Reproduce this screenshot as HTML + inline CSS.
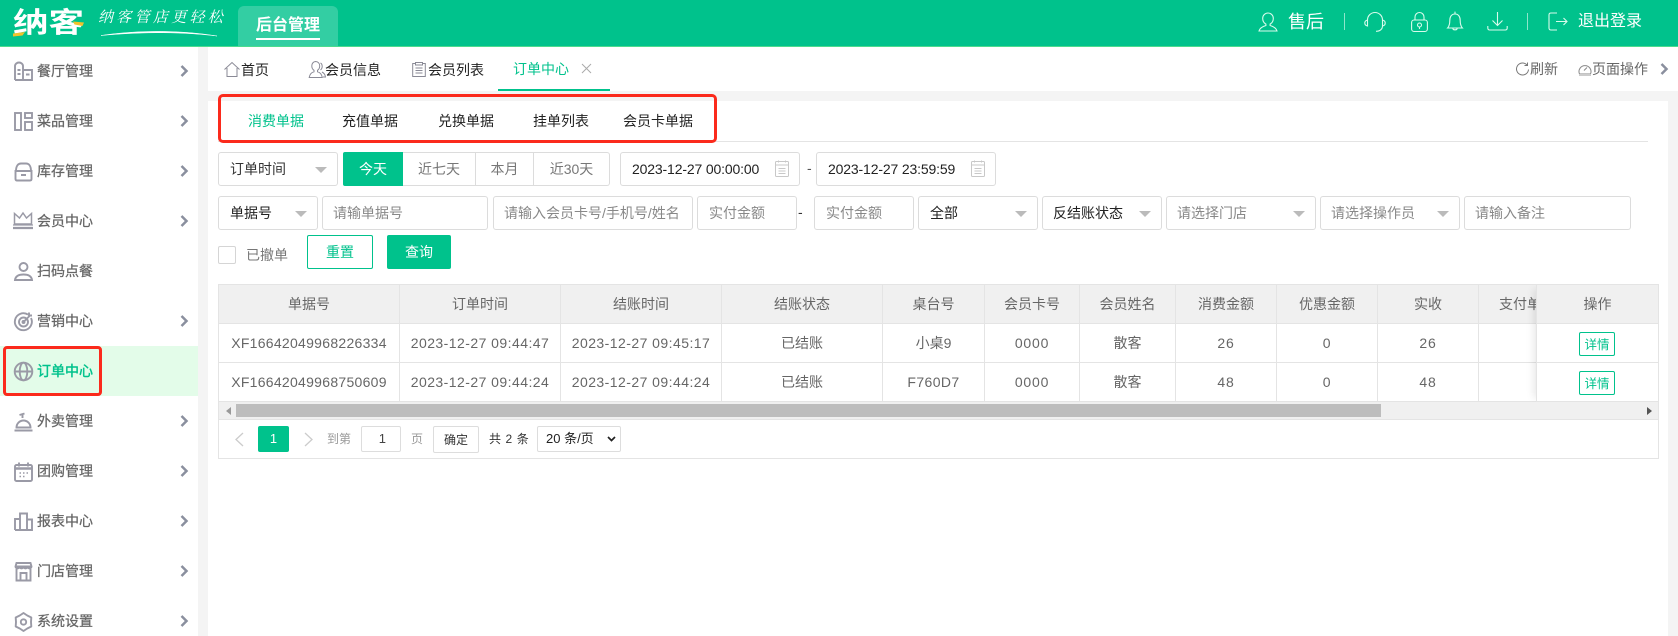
<!DOCTYPE html>
<html lang="zh-CN"><head><meta charset="utf-8"><title>订单中心</title>
<style>
*{box-sizing:border-box;margin:0;padding:0}
html,body{width:1678px;height:636px;overflow:hidden;background:#fff}
body{position:relative;font:14px/20px "Liberation Sans","Noto Sans CJK SC",sans-serif;color:#666}
.a{position:absolute;white-space:nowrap}
svg{position:absolute;fill:none;overflow:visible}
.side{left:37px;width:100px;height:50px;line-height:50px;font-size:14px;color:#666;-webkit-text-stroke:.25px #666}
.ch{left:180px;width:8px;height:12px}
.ch path{stroke-width:2.500}
.ic{left:14px;width:19px;height:19px;stroke:#9a9aa6;stroke-width:1.900}
.h{stroke:#d8fbec;stroke-width:1.100}
.t{stroke:#8a8a96;stroke-width:1}
.f{height:34px;line-height:32px;border:1px solid #dcdcdc;border-radius:3px;padding-left:11px;background:#fff;color:#888;overflow:hidden}
.p10{padding-left:10px}
.s{color:#333}
.f i{position:absolute;right:10px;top:14px;width:0;height:0;border-left:6px solid transparent;border-right:6px solid transparent;border-top:6px solid #bbb}
.g{top:152px;height:34px;line-height:32px;border:1px solid #dcdcdc;border-left:0;text-align:center;color:#777}
table{border-collapse:separate;border-spacing:0;table-layout:fixed;position:absolute;left:0;top:0}
td,th{height:39px;font-weight:400;text-align:center;border-right:1px solid #e4e4e4;border-bottom:1px solid #e4e4e4;color:#666;white-space:nowrap;overflow:hidden;padding:0}
th{background:#f0f0f0}
.dt{letter-spacing:.45px}.xf{letter-spacing:.28px}.n{letter-spacing:.8px}
.d{left:1579px;width:36px;height:24px;line-height:24px;border:1px solid #00c28c;border-radius:2px;color:#00c28c;font-size:12.500px;text-align:center;background:#fff}
</style></head><body>

<!-- header -->
<div class="a" style="left:0;top:0;width:1678px;height:46px;background:#00c28c"></div>
<div class="a" style="left:0;top:46px;width:1678px;height:1px;background:#4ddb8e"></div>
<div class="a" style="left:13px;top:4px;width:60px;height:38px;line-height:38px;font-size:28px;font-weight:700;color:#fff;transform:scaleX(1.270);transform-origin:0 50%">纳客</div>
<svg style="left:0;top:0;width:100px;height:46px"><path d="M13 33.500l12-1.500-2.500 3.500-9.500 1zM73 21.500l11 1-1.500 3.500-8-1.500z" fill="#f1c22c"/></svg>
<div class="a" style="left:98px;top:5px;width:130px;height:24px;line-height:24px;font-family:'Noto Serif CJK SC',serif;font-size:15px;letter-spacing:3.300px;color:#fff;font-style:italic">纳客管店更轻松</div>
<svg style="left:0;top:0;width:240px;height:46px"><path d="M101 35.500C130 31 175 29 217 36C175 31 135 32.500 101 35.500Z" fill="#fff" stroke="#fff" stroke-width=".5"/></svg>
<div class="a" style="left:238px;top:6px;width:100px;height:40px;background:#33cea3;border-radius:6px 6px 0 0"></div>
<div class="a" style="left:256px;top:14px;width:64px;height:24px;line-height:24px;font-size:16px;font-weight:700;color:#fff">后台管理</div>
<div class="a" style="left:256px;top:38px;width:64px;height:2px;background:#fff"></div>

<svg class="h" style="left:1258px;top:12px;width:20px;height:20px"><path d="M10 1a5.300 5.300 0 0 1 5.300 5.500c0 2.600-1.400 4.600-3.200 5.600v1.400c2.700.8 6 2.200 6.900 5.500H1c.9-3.300 4.200-4.700 6.900-5.500v-1.400C6.100 11.100 4.700 9.100 4.700 6.500A5.300 5.300 0 0 1 10 1z"/></svg>
<div class="a" style="left:1288px;top:9px;height:26px;line-height:26px;font-size:18px;color:#fff">售后</div>
<div class="a" style="left:1344px;top:13px;width:1px;height:17px;background:#8ee6cb"></div>
<svg class="h" style="left:1364px;top:12px;width:22px;height:20px"><path d="M3.500 9V8a7.500 7.500 0 0 1 15 0v1M3.500 8C1.800 8.400 .8 9.300 .8 11s1 2.600 2.700 3zM18.500 8c1.700.4 2.700 1.300 2.700 3s-1 2.600-2.700 3zM18.500 14c0 3-2.500 5.300-6.500 5.300"/></svg>
<svg class="h" style="left:1411px;top:12px;width:17px;height:20px"><rect x=".6" y="8" width="15.800" height="11.500" rx="2.500"/><path d="M4 8V5a4.500 4.500 0 0 1 9 0v3"/><circle cx="8.500" cy="13" r="2"/><path d="M8.500 15v2"/></svg>
<svg class="h" style="left:1447px;top:11px;width:16px;height:21px"><path d="M8 3C4.300 3 2.800 6 2.800 9.500c0 3.500-.8 6-2.200 7.500h14.800c-1.400-1.500-2.200-4-2.200-7.500C13.200 6 11.700 3 8 3zM8 3V.6M5.800 17.500c.3 1.800 4.100 1.800 4.400 0"/></svg>
<svg class="h" style="left:1487px;top:11px;width:21px;height:20px"><path d="M10.500 1v13M5.500 9.500l5 5 5-5M.8 15v2c0 1.300.8 2 2 2h15.400c1.200 0 2-.7 2-2v-2"/></svg>
<div class="a" style="left:1527px;top:13px;width:1px;height:17px;background:#8ee6cb"></div>
<svg class="h" style="left:1548px;top:12px;width:20px;height:19px"><path d="M9 1H3C1.600 1 1 1.800 1 3v13c0 1.300.6 2 2 2h6M8 9.500h11M15.500 6l3.500 3.500-3.500 3.500"/></svg>
<div class="a" style="left:1578px;top:10px;height:24px;line-height:24px;font-size:16px;color:#fff">退出登录</div>

<!-- backgrounds -->
<div class="a" style="left:198px;top:47px;width:10px;height:589px;background:#f4f4f4"></div>
<div class="a" style="left:198px;top:91px;width:1480px;height:10px;background:#f4f4f4"></div>
<div class="a" style="left:1668px;top:91px;width:10px;height:545px;background:#f4f4f4"></div>

<!-- sidebar -->
<div class="a" style="left:0;top:346px;width:198px;height:50px;background:#e3fce9"></div>
<div class="a side" style="top:46px">餐厅管理</div>
<div class="a side" style="top:96px">菜品管理</div>
<div class="a side" style="top:146px">库存管理</div>
<div class="a side" style="top:196px">会员中心</div>
<div class="a side" style="top:246px">扫码点餐</div>
<div class="a side" style="top:296px">营销中心</div>
<div class="a side" style="top:346px;color:#00c28c;-webkit-text-stroke:.4px #00c28c">订单中心</div>
<div class="a side" style="top:396px">外卖管理</div>
<div class="a side" style="top:446px">团购管理</div>
<div class="a side" style="top:496px">报表中心</div>
<div class="a side" style="top:546px">门店管理</div>
<div class="a side" style="top:596px">系统设置</div>

<svg class="ic" style="top:62px"><path d="M1 18V4c0-2 2-3.500 4-3.500S9 2 9 4v14M1 18h17V8H9M12 12.500h3.500M3.500 8h3M3.500 12h3"/></svg>
<svg class="ic" style="top:112px"><rect x="1" y="1" width="6" height="17"/><rect x="11" y="1" width="7" height="5"/><rect x="11" y="10" width="7" height="8"/></svg>
<svg class="ic" style="top:162px"><path d="M2 9C2 4 4 1.500 7 1.500h5C15 1.500 17 4 17 9M1.500 9h16v8c0 1-.6 1.500-1.500 1.500H3c-.9 0-1.500-.5-1.500-1.500zM7 13h5"/></svg>
<svg class="ic" style="top:212px;left:13px;width:20px;height:18px"><path d="M1.500 12V1.500L6.500 6 10 1l3.500 5 5-4.500V12z" stroke-width="1.500"/><path d="M0 13h20" stroke-width="1.200"/><path d="M0 16h20" stroke-width="2.200"/></svg>
<svg class="ic" style="top:262px"><circle cx="9.500" cy="5" r="4"/><path d="M1 18c.5-3.700 3.500-5.500 8.500-5.500s8 1.800 8.500 5.500z"/></svg>
<svg class="ic" style="top:312px"><path d="M14 2.600A8.500 8.500 0 1 0 17 6"/><circle cx="9.500" cy="10" r="4.500"/><circle cx="9.500" cy="10" r="1"/><path d="M10 9.500l6-6M15 .5v3h3"/></svg>
<svg class="ic" style="top:362px"><circle cx="9.500" cy="9.500" r="8.800"/><ellipse cx="9.500" cy="9.500" rx="3.800" ry="8.800"/><path d="M1 9.500h17"/></svg>
<svg class="ic" style="top:412px"><path d="M2.500 15.500a7 7 0 0 1 14 0zM.5 18.500h18M5.500 3l5-1.500M8.500 2v4"/></svg>
<svg class="ic" style="top:462px"><rect x="1" y="3" width="17" height="16" rx="1.500"/><path d="M1 6.500h17" stroke-width="2.500"/><path d="M5 .5v4M14 .5v4"/><path d="M5.500 11h1.500M9 11h1.500M12.500 11h1.500M5.500 14.500h1.500M9 14.500h1.500" stroke-width="1.500"/></svg>
<svg class="ic" style="top:512px"><path d="M1 18V7h5v11M6 18V1.500h7V18M13 18V7.500h5V18H1"/></svg>
<svg class="ic" style="top:562px"><path d="M2.500 1h14l1 3.500c0 2.500-4 2.500-4 0 0 2.500-4 2.500-4 0 0 2.500-4 2.500-4 0 0 2.500-4 2.500-4 0zM2.500 7v11.500h14V7M6.500 18.500V11h6v7.500M1.500 4.500h16"/></svg>
<svg class="ic" style="top:612px" stroke-linejoin="round"><path d="M9.500 1L13.250 3.500 17.300 5.500 17 10 17.300 14.500 13.250 16.500 9.500 19 5.750 16.500 1.700 14.500 2 10 1.700 5.500 5.750 3.500Z"/><circle cx="9.500" cy="10" r="2.700"/></svg>

<svg class="ch" style="top:65px"><path d="M1.500 1l5 5-5 5" stroke="#8a8f9e" stroke-width="2"/></svg>
<svg class="ch" style="top:115px"><path d="M1.500 1l5 5-5 5" stroke="#8a8f9e" stroke-width="2"/></svg>
<svg class="ch" style="top:165px"><path d="M1.500 1l5 5-5 5" stroke="#8a8f9e" stroke-width="2"/></svg>
<svg class="ch" style="top:215px"><path d="M1.500 1l5 5-5 5" stroke="#8a8f9e" stroke-width="2"/></svg>
<svg class="ch" style="top:315px"><path d="M1.500 1l5 5-5 5" stroke="#8a8f9e" stroke-width="2"/></svg>
<svg class="ch" style="top:415px"><path d="M1.500 1l5 5-5 5" stroke="#8a8f9e" stroke-width="2"/></svg>
<svg class="ch" style="top:465px"><path d="M1.500 1l5 5-5 5" stroke="#8a8f9e" stroke-width="2"/></svg>
<svg class="ch" style="top:515px"><path d="M1.500 1l5 5-5 5" stroke="#8a8f9e" stroke-width="2"/></svg>
<svg class="ch" style="top:565px"><path d="M1.500 1l5 5-5 5" stroke="#8a8f9e" stroke-width="2"/></svg>
<svg class="ch" style="top:615px"><path d="M1.500 1l5 5-5 5" stroke="#8a8f9e" stroke-width="2"/></svg>
<div class="a" style="left:3px;top:346px;width:99px;height:50px;border:3px solid #fb2a1c;border-radius:4px"></div>

<!-- tab bar -->
<svg class="t" style="left:224px;top:62px;width:16px;height:15px"><path d="M.5 7.500L8 .5l7.500 7M3 6v8.500h10V6"/></svg>
<div class="a" style="left:241px;top:60px;color:#222">首页</div>
<svg class="t" style="left:309px;top:61px;width:17px;height:17px"><path d="M6.500 .5a4.200 4.200 0 0 1 4.200 4.500c0 2-1 3.500-2.200 4.300v1.500c2 .5 4.200 2 4.800 5.700H.2c.6-3.700 2.800-5.200 4.800-5.700V9.300C3.800 8.500 2.800 7 2.800 5A4.200 4.200 0 0 1 6.500 .5zM11.500 2c2 1 2.500 5 0 7M14 16h2.500c-.3-2.500-1.500-4-3.500-5"/></svg>
<div class="a" style="left:325px;top:60px;color:#222">会员信息</div>
<svg class="t" style="left:412px;top:62px;width:14px;height:15px"><path d="M3 1.500H.7v13h12.600v-13H11M3.500 .5h7v2.500h-7zM3.500 6h7M3.500 8.500h7M3.500 11h7"/></svg>
<div class="a" style="left:428px;top:60px;color:#222">会员列表</div>
<div class="a" style="left:513px;top:59px;color:#00c28c">订单中心</div>
<div class="a" style="left:498px;top:89px;width:112px;height:2px;background:#00c28c"></div>
<svg style="left:581px;top:63px;width:11px;height:11px"><path d="M1 1l9 9M10 1l-9 9" stroke="#aaa" stroke-width="1"/></svg>
<svg class="t" style="left:1516px;top:62px;width:13px;height:14px"><path d="M11 3a6 6 0 1 0 1.500 4.500M11.500 .5V3.500H8.500" stroke="#777"/></svg>
<div class="a" style="left:1530px;top:59px;color:#666">刷新</div>
<svg class="t" style="left:1578px;top:63px;width:14px;height:13px"><path d="M1.500 11a6 6 0 1 1 11 0zM6 7.500l3-3" stroke="#888"/><path d="M1 12h12" stroke="#ccc" stroke-width="2"/></svg>
<div class="a" style="left:1592px;top:59px;color:#666">页面操作</div>
<svg style="left:1660px;top:63px;width:8px;height:12px"><path d="M1.500 1l5 5-5 5" stroke="#8a8f9e" stroke-width="2.500"/></svg>

<!-- sub tabs -->
<div class="a" style="left:218px;top:141px;width:1430px;height:1px;background:#e4e4e4"></div>
<div class="a" style="left:248px;top:111px;color:#00c28c">消费单据</div>
<div class="a" style="left:342px;top:111px;color:#222">充值单据</div>
<div class="a" style="left:438px;top:111px;color:#222">兑换单据</div>
<div class="a" style="left:533px;top:111px;color:#222">挂单列表</div>
<div class="a" style="left:623px;top:111px;color:#222">会员卡单据</div>
<div class="a" style="left:218px;top:94px;width:499px;height:49px;border:3px solid #fb2a1c;border-radius:5px"></div>

<!-- row 1 -->
<div class="a f s" style="left:218px;top:152px;width:120px">订单时间<i></i></div>
<div class="a" style="left:343px;top:152px;width:60px;height:34px;line-height:34px;background:#00c28c;color:#fff;text-align:center;border-radius:2px 0 0 2px">今天</div>
<div class="a g" style="left:403px;width:73px">近七天</div>
<div class="a g" style="left:475px;border-left:1px solid #dcdcdc;width:59px">本月</div>
<div class="a g" style="left:534px;width:76px;border-radius:0 3px 3px 0">近30天</div>
<div class="a f s" style="left:620px;top:152px;width:180px;color:#222;letter-spacing:-.15px">2023-12-27 00:00:00</div>
<svg class="t" style="left:775px;top:160px;width:14px;height:17px"><g stroke="#c8c8c8"><rect x=".5" y="1.500" width="13" height="15" rx="1"/><path d="M.5 5h13M3.500 8.500h7M3.500 11h7M3.500 13.500h7M3.500 .5v2M10.500 .5v2"/></g></svg>
<div class="a" style="left:807px;top:158px;color:#555">-</div>
<div class="a f s" style="left:816px;top:152px;width:180px;color:#222;letter-spacing:-.15px">2023-12-27 23:59:59</div>
<svg class="t" style="left:971px;top:160px;width:14px;height:17px"><g stroke="#c8c8c8"><rect x=".5" y="1.500" width="13" height="15" rx="1"/><path d="M.5 5h13M3.500 8.500h7M3.500 11h7M3.500 13.500h7M3.500 .5v2M10.500 .5v2"/></g></svg>

<!-- row 2 -->
<div class="a f s" style="left:218px;top:196px;width:100px;color:#222">单据号<i></i></div>
<div class="a f p10" style="left:322px;top:196px;width:166px">请输单据号</div>
<div class="a f p10" style="left:493px;top:196px;width:200px;white-space:nowrap">请输入会员卡号/手机号/姓名</div>
<div class="a f" style="left:697px;top:196px;width:100px">实付金额</div>
<div class="a" style="left:798px;top:202px;color:#333">-</div>
<div class="a f" style="left:814px;top:196px;width:100px">实付金额</div>
<div class="a f s" style="left:918px;top:196px;width:120px;color:#222">全部<i></i></div>
<div class="a f s p10" style="left:1042px;top:196px;width:120px;color:#222">反结账状态<i></i></div>
<div class="a f p10" style="left:1166px;top:196px;width:150px">请选择门店<i></i></div>
<div class="a f p10" style="left:1320px;top:196px;width:140px">请选择操作员<i></i></div>
<div class="a f p10" style="left:1464px;top:196px;width:167px">请输入备注</div>

<!-- row 3 -->
<div class="a" style="left:218px;top:246px;width:18px;height:18px;border:1px solid #d5d5d5;border-radius:2px"></div>
<div class="a" style="left:246px;top:245px;color:#777">已撤单</div>
<div class="a" style="left:307px;top:235px;width:66px;height:34px;line-height:32px;border:1px solid #00c28c;border-radius:2px;color:#00c28c;text-align:center">重置</div>
<div class="a" style="left:387px;top:235px;width:64px;height:34px;line-height:34px;background:#00c28c;border-radius:2px;color:#fff;text-align:center">查询</div>

<!-- table -->
<div class="a" style="left:218px;top:284px;width:1441px;height:175px;border:1px solid #e4e4e4;overflow:hidden">
<div class="a" style="left:0;top:0;width:1439px;height:117px;overflow:hidden">
<table style="width:1357px"><colgroup><col style="width:181px"><col style="width:161px"><col style="width:161px"><col style="width:161px"><col style="width:102px"><col style="width:95px"><col style="width:96px"><col style="width:101px"><col style="width:101px"><col style="width:101px"><col style="width:97px"></colgroup>
<tr><th>单据号</th><th>订单时间</th><th>结账时间</th><th>结账状态</th><th>桌台号</th><th>会员卡号</th><th>会员姓名</th><th>消费金额</th><th>优惠金额</th><th>实收</th><th>支付单据</th></tr>
<tr><td class="xf">XF16642049968226334</td><td class="dt">2023-12-27 09:44:47</td><td class="dt">2023-12-27 09:45:17</td><td>已结账</td><td>小桌9</td><td class="n">0000</td><td>散客</td><td class="n">26</td><td class="n">0</td><td class="n">26</td><td></td></tr>
<tr><td class="xf">XF16642049968750609</td><td class="dt">2023-12-27 09:44:24</td><td class="dt">2023-12-27 09:44:24</td><td>已结账</td><td style="letter-spacing:.4px">F760D7</td><td class="n">0000</td><td>散客</td><td class="n">48</td><td class="n">0</td><td class="n">48</td><td></td></tr>
</table></div>
<div class="a" style="left:1317px;top:0;width:122px;height:117px;background:#fff;border-left:1px solid #e4e4e4;box-shadow:-6px 0 8px -4px rgba(0,0,0,.1)">
<div style="height:39px;line-height:38px;background:#f0f0f0;border-bottom:1px solid #e4e4e4;text-align:center">操作</div>
<div style="height:39px;border-bottom:1px solid #e4e4e4"></div>
<div style="height:39px;border-bottom:1px solid #e4e4e4"></div>
</div>
<div class="a" style="left:0;top:117px;width:1439px;height:18px;background:#f0f0f0;border-bottom:1px solid #e4e4e4"></div>
<div class="a" style="left:17px;top:119px;width:1145px;height:13px;background:#bdbdbd"></div>
<svg style="left:7px;top:122px;width:6px;height:8px"><path d="M5 0v8L0 4z" fill="#999"/></svg>
<svg style="left:1428px;top:122px;width:6px;height:8px"><path d="M0 0v8l5-4z" fill="#555"/></svg>
</div>
<div class="a d" style="top:332px">详情</div>
<div class="a d" style="top:371px">详情</div>

<!-- pagination -->
<svg style="left:235px;top:432px;width:9px;height:15px"><path d="M8 1L1 7.500 8 14" stroke="#ccc" stroke-width="1.300"/></svg>
<div class="a" style="left:258px;top:426px;width:31px;height:26px;line-height:26px;background:#00c28c;color:#fff;text-align:center;border-radius:2px;font-size:13px">1</div>
<svg style="left:304px;top:432px;width:9px;height:15px"><path d="M1 1l7 6.500L1 14" stroke="#ccc" stroke-width="1.300"/></svg>
<div class="a" style="left:327px;top:429px;font-size:12px;color:#999">到第</div>
<div class="a" style="left:361px;top:426px;width:40px;height:26px;line-height:24px;border:1px solid #ddd;border-radius:2px;text-align:right;padding-right:14px;font-size:13px;color:#444">1</div>
<div class="a" style="left:411px;top:429px;font-size:12px;color:#999">页</div>
<div class="a" style="left:433px;top:426px;width:46px;height:27px;line-height:27px;border:1px solid #ddd;border-radius:2px;text-align:center;font-size:12px;color:#333">确定</div>
<div class="a" style="left:489px;top:429px;font-size:12px;color:#333;letter-spacing:.6px">共 2 条</div>
<div class="a" style="left:537px;top:426px;width:84px;height:26px;line-height:24px;border:1px solid #ddd;border-radius:2px;padding-left:8px;font-size:13px;color:#222">20 条/页</div>
<svg style="left:607px;top:436px;width:9px;height:6px"><path d="M1 1l3.500 3.500L8 1" stroke="#222" stroke-width="1.700"/></svg>

</body></html>
